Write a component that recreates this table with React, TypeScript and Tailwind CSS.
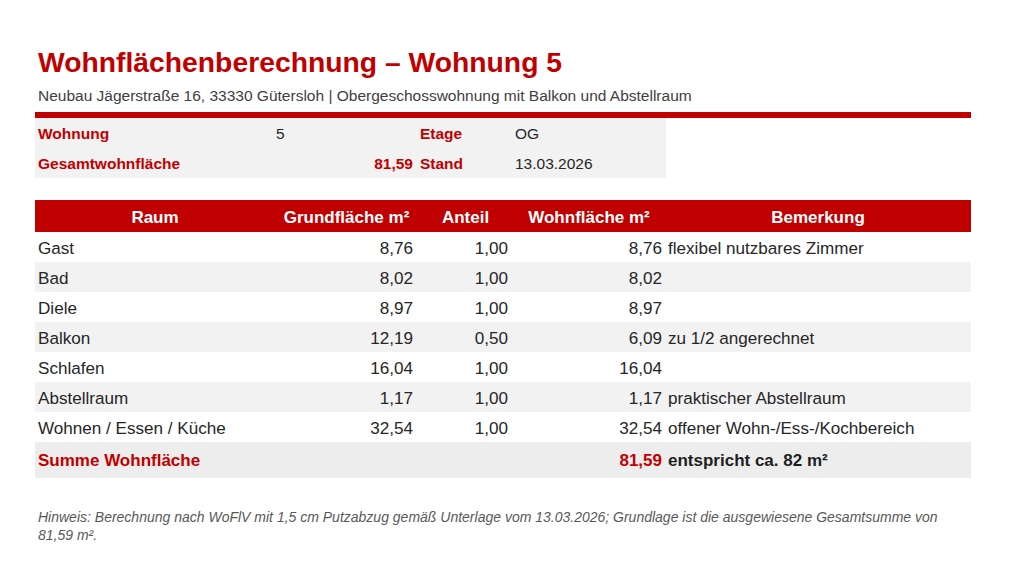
export default function App() {
  const rows = [
    { raum: "Gast", grund: "8,76", anteil: "1,00", wohn: "8,76", bem: "flexibel nutzbares Zimmer" },
    { raum: "Bad", grund: "8,02", anteil: "1,00", wohn: "8,02", bem: "" },
    { raum: "Diele", grund: "8,97", anteil: "1,00", wohn: "8,97", bem: "" },
    { raum: "Balkon", grund: "12,19", anteil: "0,50", wohn: "6,09", bem: "zu 1/2 angerechnet" },
    { raum: "Schlafen", grund: "16,04", anteil: "1,00", wohn: "16,04", bem: "" },
    { raum: "Abstellraum", grund: "1,17", anteil: "1,00", wohn: "1,17", bem: "praktischer Abstellraum" },
    { raum: "Wohnen / Essen / Küche", grund: "32,54", anteil: "1,00", wohn: "32,54", bem: "offener Wohn-/Ess-/Kochbereich" },
  ];

  return (
    <div
      className="w-[1023px] h-[573px] bg-white pl-[35px] pt-[46px] text-[#262626]"
      style={{ fontFamily: '"Liberation Sans", Arial, sans-serif' }}
    >
      <div className="w-[936px]">
        {/* Header */}
        <h1 className="pl-[3px] text-[28.3px] font-bold text-[#c00000] leading-[32px]">
          Wohnflächenberechnung – Wohnung 5
        </h1>
        <p className="pl-[3px] mt-[9px] text-[15.5px] leading-[18px] text-[#404040]">
          Neubau Jägerstraße 16, 33330 Gütersloh | Obergeschosswohnung mit Balkon und Abstellraum
        </p>
        <div className="mt-[7px] h-[6px] bg-[#c00000]" />

        {/* Info block */}
        <div className="w-[631px] bg-[#f2f2f2] text-[15.5px]">
          <div className="grid grid-cols-[240px_143px_95px_1fr] h-[30px] pt-[2px] items-center">
            <div className="pl-[3px] font-bold text-[#c00000]">Wohnung</div>
            <div className="pl-[1px]">5</div>
            <div className="pl-[2px] font-bold text-[#c00000]">Etage</div>
            <div className="pl-[2px]">OG</div>
          </div>
          <div className="grid grid-cols-[240px_143px_95px_1fr] h-[30px] pt-[2px] items-center">
            <div className="pl-[3px] font-bold text-[#c00000]">Gesamtwohnfläche</div>
            <div className="pr-[5px] text-right font-bold text-[#c00000]">81,59</div>
            <div className="pl-[2px] font-bold text-[#c00000]">Stand</div>
            <div className="pl-[2px]">13.03.2026</div>
          </div>
        </div>

        {/* Main table */}
        <div className="mt-[22px]">
          <div className="grid grid-cols-[240px_143px_95px_152px_1fr] h-[32px] pt-[3px] items-center bg-[#c00000] text-white text-[17px] font-bold text-center">
            <div>Raum</div>
            <div>Grundfläche m²</div>
            <div>Anteil</div>
            <div>Wohnfläche m²</div>
            <div>Bemerkung</div>
          </div>
          {rows.map((r, i) => (
            <div
              key={r.raum}
              className={`grid grid-cols-[240px_143px_95px_152px_1fr] h-[30px] pt-[3px] items-center text-[17.1px] ${
                i % 2 === 1 ? "bg-[#f2f2f2]" : "bg-white"
              }`}
            >
              <div className="pl-[3px]">{r.raum}</div>
              <div className="pr-[5px] text-right">{r.grund}</div>
              <div className="pr-[5px] text-right">{r.anteil}</div>
              <div className="pr-[3px] text-right">{r.wohn}</div>
              <div className="pl-[3px]">{r.bem}</div>
            </div>
          ))}
          <div className="grid grid-cols-[240px_143px_95px_152px_1fr] h-[36px] pt-[2px] items-center bg-[#ededed] text-[17px] font-bold">
            <div className="pl-[3px] text-[#c00000]">Summe Wohnfläche</div>
            <div />
            <div />
            <div className="pr-[3px] text-right text-[#c00000]">81,59</div>
            <div className="pl-[3px] text-[#1f1f1f]">entspricht ca. 82 m²</div>
          </div>
        </div>

        {/* Footnote */}
        <p className="mt-[30px] pl-[3px] pr-[20px] text-[14px] leading-[18px] italic text-[#595959]">
          Hinweis: Berechnung nach WoFlV mit 1,5 cm Putzabzug gemäß Unterlage vom 13.03.2026; Grundlage ist die ausgewiesene Gesamtsumme von 81,59 m².
        </p>
      </div>
    </div>
  );
}
